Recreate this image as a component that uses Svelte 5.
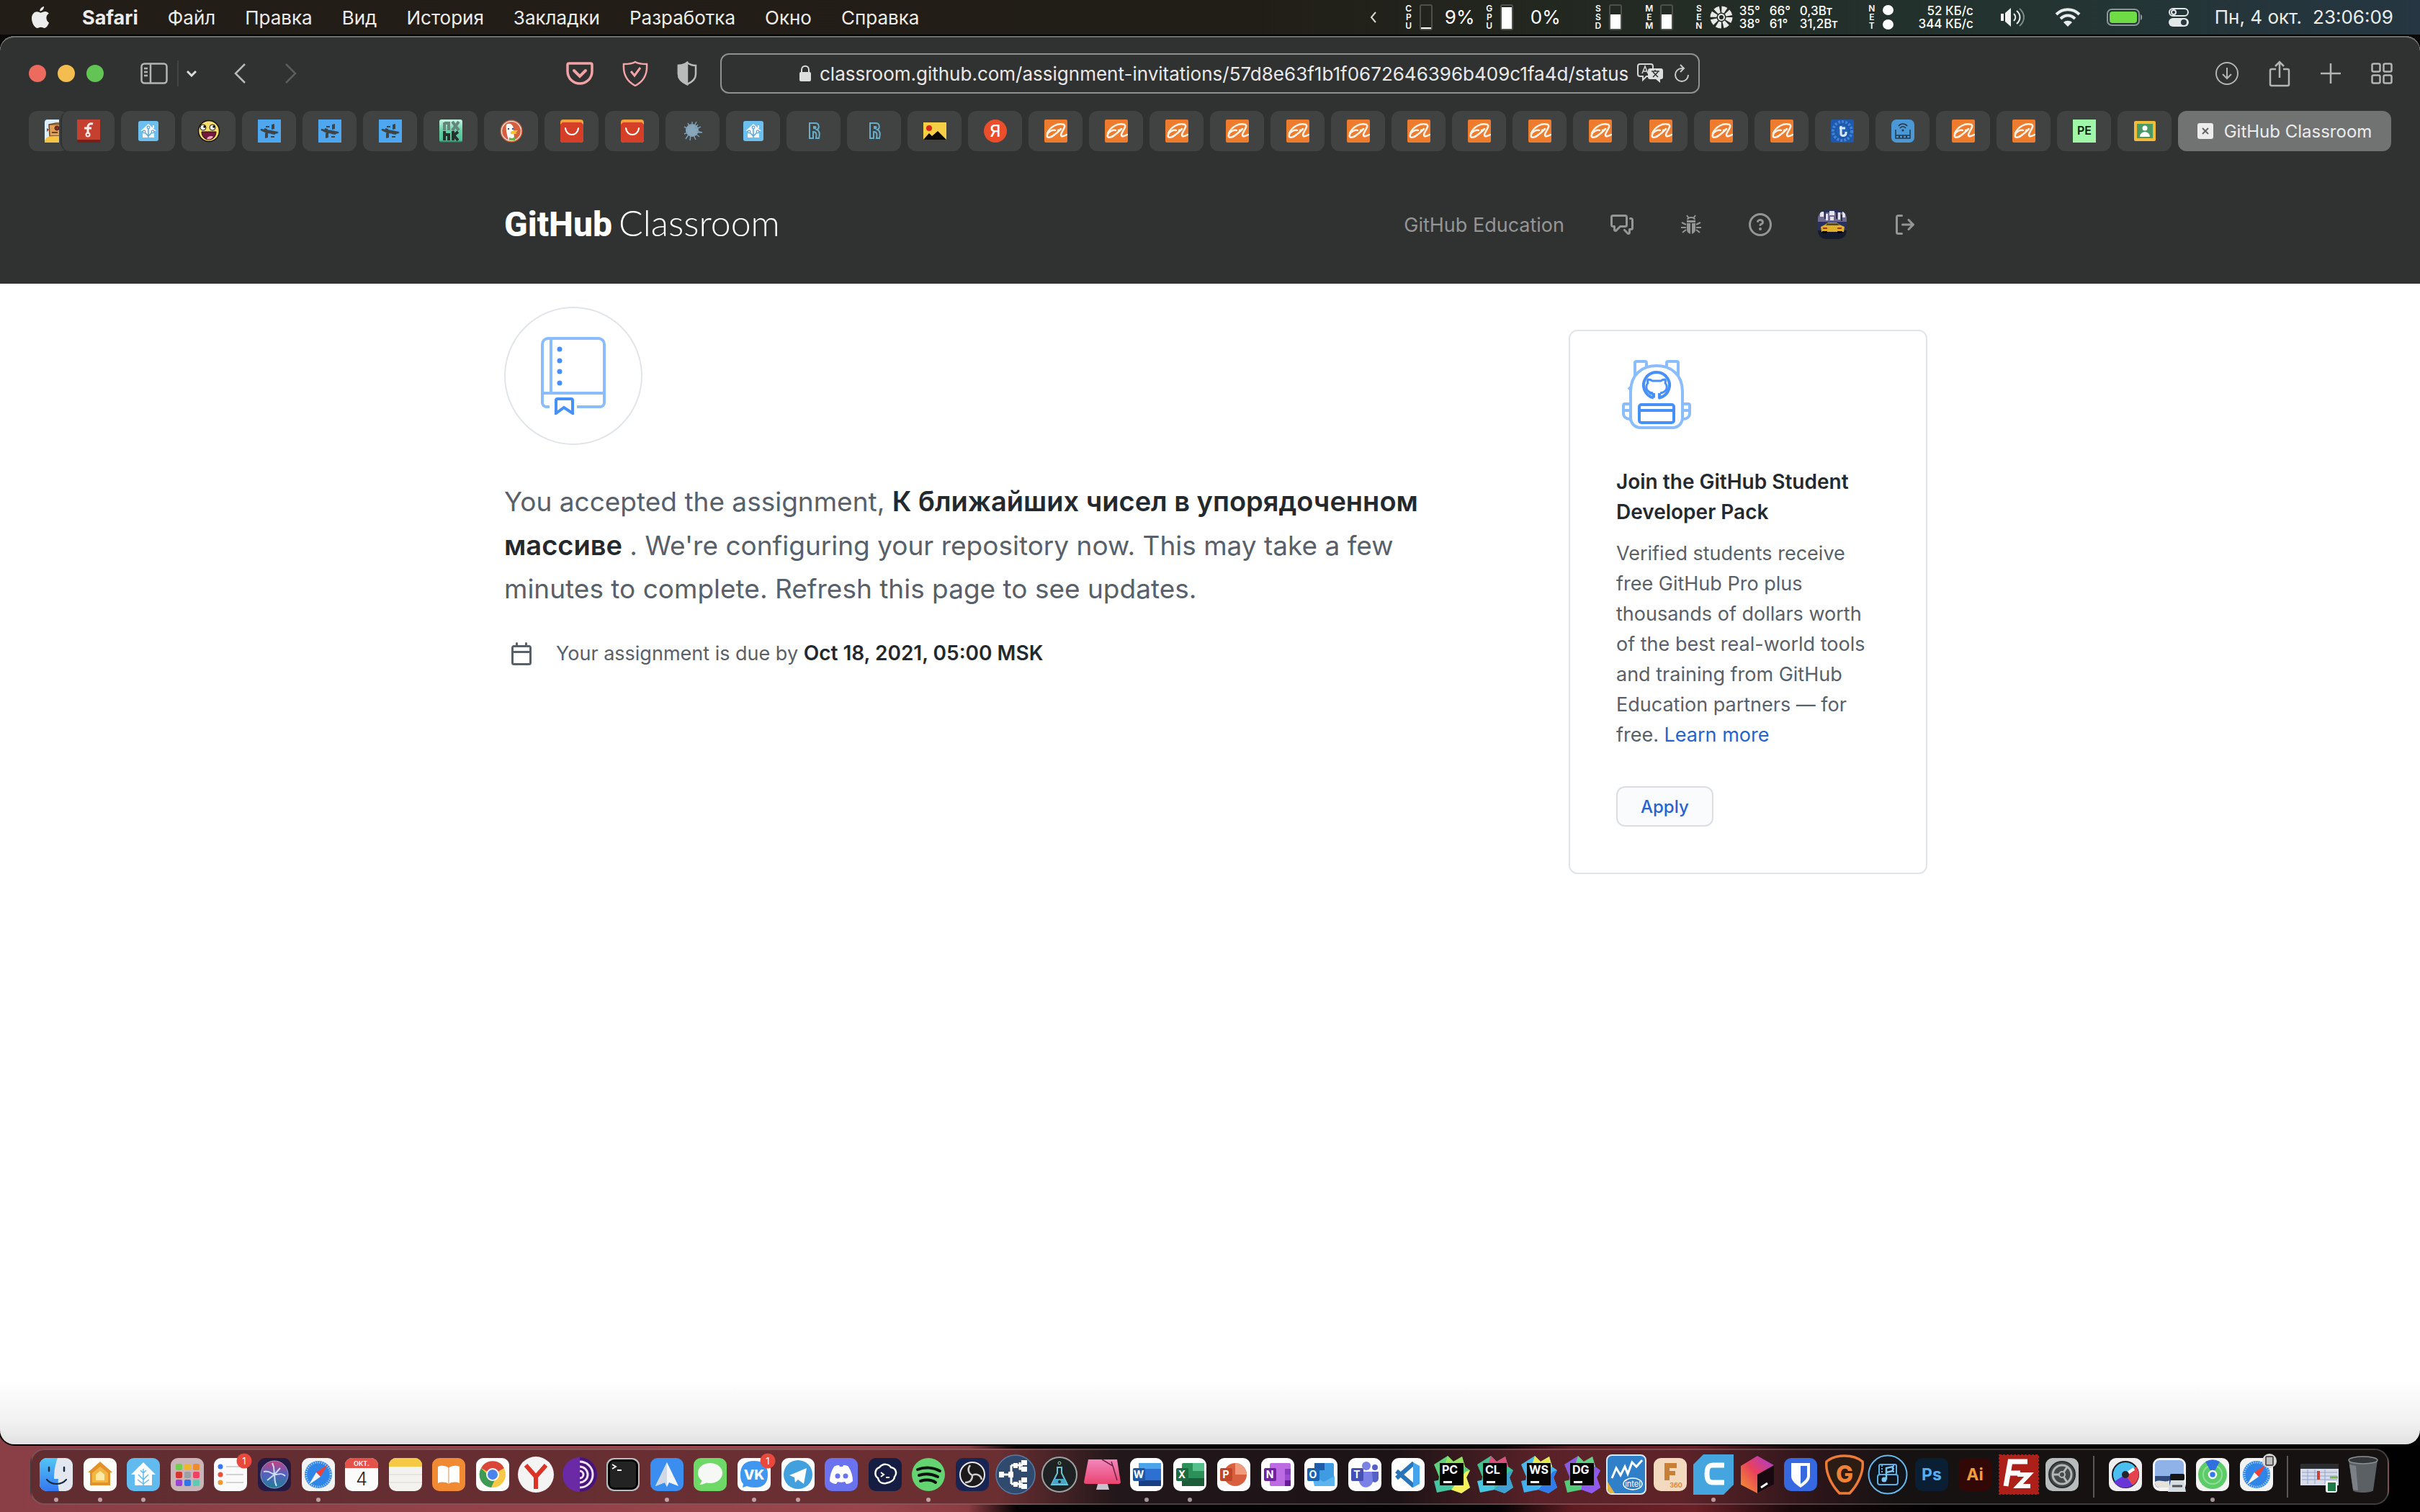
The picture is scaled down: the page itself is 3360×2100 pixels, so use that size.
<script>
  const menus = ['Файл', 'Правка', 'Вид', 'История', 'Закладки', 'Разработка', 'Окно', 'Справка'];

  // Favicons, drawn on a 32 x 32 grid
  const fav = {
    robot: '<rect width="32" height="32" rx="4" fill="#dceefb"/><path d="M6 7l10-2h12v18H7z" fill="#e0a055" stroke="#6b4423" stroke-width="1.500"/><path d="M6 7h22" stroke="#6b4423"/><circle cx="17" cy="12" r="3" fill="#8c2b22" stroke="#3f2412"/><path d="M3 12l3 2-3 3z" fill="#a8322c"/><path d="M10 18h8" stroke="#6b4423" stroke-width="2"/><path d="M0 32c0-6 4-9 12-9h20v9z" fill="#f6c242"/>',
    f: '<rect width="32" height="32" fill="#c5402f"/><rect y="28" width="32" height="4" fill="#7b1f16"/><path d="M22 6c-5-1-7 1-7 5v9M10 12h10" stroke="#fbeeec" stroke-width="3" fill="none"/><circle cx="15" cy="21" r="2.500" fill="none" stroke="#fbeeec" stroke-width="2"/>',
    home: '<rect x="2" y="2" width="28" height="28" rx="3" fill="#6cbfee"/><path d="M16 6l11 10h-3v9H8v-9H5z" fill="#f5f5f5"/><path d="M22 8h2v4h-2z" fill="#f5f5f5"/><path d="M16 12v13M16 23l-5-5M16 23l5-5" stroke="#5aa9d6" stroke-width="1.500" fill="none"/><g fill="#f5f5f5" stroke="#5aa9d6" stroke-width="1.200"><circle cx="16" cy="11" r="1.800"/><circle cx="10" cy="17" r="1.800"/><circle cx="22" cy="17" r="1.800"/></g>',
    smile: '<circle cx="16" cy="16" r="14.500" fill="#f7dc6c" stroke="#16130a" stroke-width="1.500"/><circle cx="8" cy="11" r="4" fill="#fff" stroke="#16130a"/><circle cx="21" cy="11" r="4" fill="#fff" stroke="#16130a"/><circle cx="10" cy="10" r="1.800" fill="#111"/><circle cx="23" cy="10" r="1.800" fill="#111"/><path d="M6 17h20c0 6-4 11-10 11S6 23 6 17z" fill="#74183d" stroke="#16130a"/><path d="M13 27c1-4 7-5 9-3-2 3-5 4-9 3z" fill="#efa6c4"/>',
    ha: '<rect width="32" height="32" fill="#4ea7ef"/><path d="M19 7l4-1v7l-4 1zM10 19l4-1v7l-4 1z" fill="#3f4447"/><path d="M4 14l14 2 10 2-4 1-12-1z" fill="#3f4447" stroke="#3f4447" stroke-width="2"/><path d="M11 10h5M9 13l4 1M18 19l6 1M18 24h5" stroke="#3f4447" stroke-width="2"/>',
    uxhk: '<rect width="32" height="32" rx="3" fill="url(#gMint)"/><path d="M7 4v11M7 5h6v10M18 3l9 12M27 3l-9 12" stroke="#66867d" stroke-width="4" fill="none"/><path d="M7 16v13M7 21h6v8M19 16v13M26 17l-6 5 6 7" stroke="#24312d" stroke-width="4" fill="none"/>',
    duck: '<circle cx="16" cy="16" r="15.500" fill="#d5603f"/><circle cx="16" cy="16" r="13.500" fill="none" stroke="#f7ece8" stroke-width="1.200"/><path d="M9 7c5-3 10 0 10 7l1 14c-3 1-6 1-8 0-2-6-4-14-3-21z" fill="#fff"/><path d="M15 17c3-2 7-2 10-2-2 3-3 3-4 3l3 1c-3 2-7 1-9 1z" fill="#f7c331"/><path d="M13 25l4 1 4-2v5h-8z" fill="#67b04a"/><circle cx="12" cy="13" r="1.200" fill="#2d4f8e"/><circle cx="18" cy="13" r="1.200" fill="#2d4f8e"/>',
    ali: '<rect width="32" height="32" rx="4" fill="#f2a13c"/><path d="M0 7l3-3h26l3 3v21a4 4 0 01-4 4H4a4 4 0 01-4-4z" fill="#d53f27"/><path d="M7 12c1 12 17 12 18 0" stroke="#fff" stroke-width="2.200" fill="none" stroke-linecap="round"/>',
    splat: '<circle cx="15" cy="15" r="9" fill="#86a7bb"/><path d="M15 3v5M21 3l-3 6M27 10l-6 3M29 18l-8-2M25 24l-5-4M20 28l-3-6M12 29l1-7M6 27l4-6M4 20l5-2M4 10l5 3M9 5l3 5M22 18l7 0M23 7l-4 5" stroke="#7a9db3" stroke-width="1.500"/>',
    r: '<path d="M10 5h8c6 0 6 8 2 9 5 2 4 8 3 12h-4c1-5 1-9-4-9v9h-5z" fill="none" stroke="#66aecb" stroke-width="2"/><path d="M15 9h3c2 0 2 4 0 4h-3z" fill="#66aecb"/>',
    pic: '<rect y="4" width="32" height="24" fill="#f7cf46"/><path d="M0 28l8-9 4 4 8-7 12 12z" fill="#0b0905"/><circle cx="8" cy="12" r="4" fill="#d9291c"/>',
    ya: '<circle cx="16" cy="16" r="16" fill="#ea4e2a"/><text x="16" y="24" text-anchor="middle" font-size="23" font-weight="500" fill="#fff">Я</text>',
    alibaba: '<rect width="32" height="32" rx="2" fill="#ee7c2f"/><path d="M4 19C8 10 19 4 27 7c4 2-3 9-4 14 0 4 4 2 8 0M15 15c-4-1-10 2-11 6-2 6 6 4 10 0 3-2 6-5 9-8" stroke="#fff3e8" stroke-width="2.500" fill="none" stroke-linecap="round"/><path d="M18 15l2-1" stroke="#fff3e8" stroke-width="1.500"/>',
    coin: '<rect width="32" height="32" rx="3" fill="#1f59ab"/><circle cx="16" cy="16" r="13" fill="none" stroke="#3f83d6" stroke-width="4" stroke-dasharray="3 2"/><circle cx="16" cy="16" r="8" fill="#2462b5"/><path d="M14 9v11c0 4 7 3 7-1v-2M12 12h8" stroke="#dbe9fa" stroke-width="3" fill="none"/>',
    router: '<rect width="32" height="32" rx="7" fill="#4a98d6"/><path d="M6 14v8M26 14v8M6 22h20v4H6zM10 9c3-4 9-4 12 0M12 12c2-3 6-3 8 0" stroke="#25394a" stroke-width="1.500" fill="none"/><path d="M10 24h2M15 24h2M20 24h2" stroke="#25394a" stroke-width="3"/><circle cx="16" cy="15" r="1.500" fill="#25394a"/>',
    pe: '<rect width="32" height="32" fill="#a1f7a8"/><text x="16" y="21" text-anchor="middle" font-size="16" font-weight="600" fill="#10200f">PE</text>',
    room: '<rect x="1" y="2" width="30" height="28" rx="2" fill="#f1bc3a"/><rect x="5" y="6" width="22" height="20" fill="#4c9a63"/><circle cx="16" cy="12" r="3.500" fill="#fff"/><path d="M9 24c0-9 14-9 14 0z" fill="#fff"/>'
  };

  const tabs = [
    'home', 'smile', 'ha', 'ha', 'ha', 'uxhk', 'duck', 'ali', 'ali', 'splat', 'home', 'r', 'r', 'pic', 'ya',
    ...Array(13).fill('alibaba'), 'coin', 'router', 'alibaba', 'alibaba', 'pe', 'room'
  ];

  // Dock icons, drawn on a 56 x 56 grid; most sit on a 46 px rounded tile
  const tile = (fill, inner = '') => `<rect x="5" y="5" width="46" height="46" rx="10" fill="${fill}"/>${inner}`;
  const office = (dark, letter, shape) =>
    tile('#fff', `${shape}<rect x="9" y="19" width="17" height="18" rx="2" fill="${dark}"/><text x="17" y="33" text-anchor="middle" font-size="14" font-weight="700" fill="#fff">${letter}</text>`);
  const jet = (colors, letters) =>
    `<path d="M3 14L22 2l8 8 12-7 4 14 7 5-5 10 5 14-12 8-14-5-20 2 3-20z" fill="${colors[0]}"/><path d="M22 2l8 8 12-7 4 14-30 4z" fill="${colors[1]}"/><path d="M53 46l-12 8-14-5 20-25 6-2-5 10z" fill="${colors[2]}"/><path d="M3 37l24-5v17l-20 4z" fill="${colors[3]}"/><rect x="11" y="12" width="33" height="31" fill="#060606"/><text x="14" y="27" font-size="16" font-weight="700" fill="#fff">${letters}</text><rect x="16" y="37" width="12" height="3" fill="#fff"/>`;
  const compass = '<circle cx="28" cy="28" r="19" fill="#2f86e8"/><circle cx="28" cy="28" r="17" fill="none" stroke="#b8dcfb" stroke-width="3" stroke-dasharray="1 2"/><path d="M41 14L31 31l-6-6z" fill="#ee4237"/><path d="M15 42l10-17 6 6z" fill="#f4f4f4"/>';
  const badge = '<circle cx="47" cy="9" r="10.500" fill="#e8493b"/><text x="47" y="14" text-anchor="middle" font-size="13" fill="#fff">1</text>';

  const apps = [
    { n: 'Finder', run: true, s: tile('#e3e8f0', '<path d="M30 5H15A10 10 0 005 15v26a10 10 0 0010 10h17c-1-5-2-9-1-17h-6c0-12 2-21 5-29z" fill="url(#gBlue)"/><path d="M18 18v5M39 18v5" stroke="#1c2b3c" stroke-width="2.500" stroke-linecap="round"/><path d="M15 35c7 8 20 8 27 0" stroke="#1c2b3c" stroke-width="2.200" fill="none" stroke-linecap="round"/>') },
    { n: 'Дом', run: true, s: tile('#fdfcf8', '<path d="M28 10l17 15h-3v18H14V25h-3z" fill="#e2912b"/><path d="M28 17l11 9v13H17V26z" fill="#f4b643"/><path d="M28 23l6 5v8H22v-8z" fill="#fde9a6"/>') },
    { n: 'Home Assistant', run: true, s: tile('#62bbee', '<path d="M28 11l17 17h-5v15H16V28h-5z" fill="#fff"/><path d="M28 20v23M28 35l-7-7M28 35l7-7M28 41l-8-6M28 41l8-6M28 26l-4-4M28 26l4-4" stroke="#62bbee" stroke-width="1.500" fill="none"/>') },
    { n: 'Launchpad', s: tile('#c9b4b8', ['#6fd04f', '#f0b62f', '#ee8b2d', '#d2362f', '#9c9fa3', '#ee4264', '#9a43d4', '#2f76ea', '#5dcbb2'].map((c, i) => `<rect x="${12 + (i % 3) * 12}" y="${13 + Math.floor(i / 3) * 11}" width="9" height="9" rx="2" fill="${c}"/>`).join('')) },
    { n: 'Напоминания', s: tile('#fafafa', '<circle cx="14" cy="17" r="3.500" fill="#3478f6"/><circle cx="14" cy="28" r="3.500" fill="#ea4f3d"/><circle cx="14" cy="39" r="3.500" fill="#f09a37"/><path d="M22 17h24M22 28h24M22 39h24" stroke="#c6c6c8" stroke-width="1.500"/>' + badge) },
    { n: 'Siri', s: tile('#251a44', '<circle cx="28" cy="28" r="19" fill="url(#gSiri)" stroke="#8fa0c8" stroke-width="1"/><path d="M13 24c8-2 11 3 15 4s9-4 15 2M25 12c4 7 2 12 3 16s-1 9 3 16M28 28l-10 8M28 28l8-9" stroke="#e9fbff" stroke-width="2" fill="none" opacity=".8"/>') },
    { n: 'Safari', run: true, s: tile('#f3f3f4', compass) },
    { n: 'Календарь', s: tile('#fbfbfb', '<path d="M5 19v-4A10 10 0 0115 5h26a10 10 0 0110 10v4z" fill="#e3534a"/><text x="28" y="16" text-anchor="middle" font-size="9" font-weight="600" fill="#fff">ОКТ.</text><text x="28" y="43" text-anchor="middle" font-size="25" font-weight="300" fill="#222">4</text>') },
    { n: 'Заметки', s: tile('#f3f2ef', '<path d="M5 17v-2A10 10 0 0115 5h26a10 10 0 0110 10v2z" fill="#f6c944"/><path d="M5 28h46M5 39h46" stroke="#d8d6d0"/>') },
    { n: 'Книги', s: tile('#f08b34', '<path d="M28 19c-4-4-11-4-15-2v23c4-2 11-2 15 1 4-3 11-3 15-1V17c-4-2-11-2-15 2z" fill="#fff"/><path d="M28 19v22" stroke="#e0b48a" stroke-width="1.500"/>') },
    { n: 'Chrome', s: tile('#fff', '<circle cx="28" cy="28" r="18" fill="#f8c947"/><path d="M28 28L12 19A18 18 0 0144 19z" fill="#d8473a"/><path d="M12 19a18 18 0 0014 27l6-13-8-2z" fill="#3f9a56"/><circle cx="28" cy="28" r="9" fill="#fff"/><circle cx="28" cy="28" r="7" fill="#4a82ee"/>') },
    { n: 'Яндекс', s: '<circle cx="28" cy="28" r="25" fill="#f4f4f5"/><path d="M14 15l14 16 14-16M28 30v18" stroke="#db3426" stroke-width="6" fill="none"/>' },
    { n: 'Tor Browser', s: '<circle cx="28" cy="28" r="24" fill="#6a2aa6"/><path d="M28 4a24 24 0 010 48z" fill="#481478"/><path d="M28 10a18 18 0 010 36M28 17a11 11 0 010 22M28 23a5 5 0 010 10" stroke="#efe3fa" stroke-width="3" fill="none"/>' },
    { n: 'Терминал', s: '<rect x="5" y="5" width="46" height="46" rx="10" fill="#b9bfc0"/><rect x="7" y="7" width="42" height="42" rx="9" fill="#000"/><rect x="10" y="10" width="36" height="36" rx="5" fill="#232323"/><path d="M13 14l5 3-5 3M20 22h6" stroke="#fff" stroke-width="1.800" fill="none"/>' },
    { n: 'Spark', run: true, s: tile('#3b8df0', '<path d="M28 11l16 33-13-5-3 6-3-6-13 5z" fill="#f3f6fa"/><path d="M28 11v34l-3-6-13 5z" fill="#cfd8e4"/>') },
    { n: 'Сообщения', s: tile('#6fd968', '<ellipse cx="28" cy="26" rx="17" ry="14" fill="#f6f8f5"/><path d="M17 34c0 4-2 6-4 8 5 0 9-2 12-4z" fill="#f6f8f5"/>') },
    { n: 'ВКонтакте', run: true, s: tile('#fff', '<path d="M28 9c13 0 19 7 19 19s-6 18-18 18c-5 0-8-1-11-2l-6 2 1-5c-3-3-4-7-4-13 0-12 6-19 19-19z" fill="#3f97f2"/><text x="28" y="35" text-anchor="middle" font-size="19" font-weight="800" fill="#fff">VK</text>' + badge) },
    { n: 'Telegram', run: true, s: tile('#fff', '<circle cx="28" cy="28" r="20" fill="#41a0dd"/><path d="M16 29l24-10-4 22-8-6-4 4-1-7z" fill="#fff"/>') },
    { n: 'Discord', s: tile('#6a72ee', '<path d="M18 17c3-2 6-2 7-2l1 2h4l1-2c1 0 5 0 7 2 4 6 6 13 6 20-3 3-6 4-9 4l-2-3c-3 1-7 1-10 0l-2 3c-3 0-6-1-9-4 0-7 2-14 6-20z" fill="#fff"/><circle cx="23" cy="30" r="3.500" fill="#6a72ee"/><circle cx="34" cy="30" r="3.500" fill="#6a72ee"/>') },
    { n: 'Termius', s: tile('#161d42', '<path d="M20 18c5-6 13-5 16 0 7 1 9 8 5 13 0 6-7 8-12 9-6 1-10-2-11-7-6-4-4-13 2-15z" fill="none" stroke="#fff" stroke-width="2.500"/><path d="M22 25l4 3-4 3M29 32h5" stroke="#fff" stroke-width="2" fill="none"/>') },
    { n: 'Spotify', run: true, s: '<circle cx="28" cy="28" r="23" fill="#63d471"/><path d="M13 21c10-4 22-3 31 2M15 29c9-3 18-2 26 2M17 37c7-2 15-2 21 2" stroke="#0c120d" stroke-width="4" fill="none" stroke-linecap="round"/>' },
    { n: 'OBS', s: tile('#182552', '<circle cx="28" cy="28" r="17" fill="#1c1a1b" stroke="#e8e8e8" stroke-width="2"/><path d="M28 29c-6-3-7-9-3-14M28 29c6-3 12 0 13 6M28 29c0 7-4 10-10 10" stroke="#cfcfcf" stroke-width="2.500" fill="none"/>') },
    { n: 'FolderSync', s: '<circle cx="28" cy="28" r="27" fill="#2f4a6c" stroke="#577ba4" stroke-width="1.500"/><path d="M10 28h12M22 15v26M22 15h16M22 41h16M34 11v9h6M34 36v9h6" stroke="#fff" stroke-width="3" fill="none"/><path d="M5 24h7v8H5zM36 8h8v7h-8zM36 17h8v7h-8zM36 32h8v7h-8zM36 41h8v7h-8zM18 24h7v8h-7zM25 12h6v7h-6zM25 38h6v7h-6z" fill="#fff"/>' },
    { n: 'Lab', s: '<circle cx="28" cy="28" r="24" fill="#1f2223" stroke="#9ba2a3" stroke-width="2"/><path d="M24 18h8M25 18v8l-8 16h22l-8-16v-8" stroke="#69c6d8" stroke-width="2" fill="none"/><path d="M21 34h14l3 7H18z" fill="#4aa4c4"/><circle cx="28" cy="12" r="2" fill="none" stroke="#8fd6b0"/><circle cx="28" cy="38" r="2" fill="#1f2223"/>' },
    { n: 'CleanMyMac', s: '<path d="M22 38h12l3 11H19z" fill="#c9c2cc"/><path d="M8 7h40l5 32a3 3 0 01-3 2H5a3 3 0 01-3-3z" fill="url(#gPink)"/><path d="M27 7l15 9 6 20M40 10l4 12" stroke="#6c2347" stroke-width="1.500" fill="none"/>' },
    { n: 'Word', run: true, s: office('#1f57a8', 'W', '<rect x="17" y="12" width="31" height="32" rx="2" fill="#2c71d2"/><path d="M17 12h31v8H17z" fill="#4ba3ea"/><path d="M17 36h31v8H17z" fill="#173f86"/>') },
    { n: 'Excel', run: true, s: office('#1d6a3e', 'X', '<rect x="17" y="12" width="31" height="32" rx="2" fill="#2c9159"/><path d="M32 12h16v11H32z" fill="#55c08b"/><path d="M17 33h31v11H17z" fill="#1c5c38"/>') },
    { n: 'PowerPoint', s: office('#c0462a', 'P', '<circle cx="30" cy="28" r="16" fill="#d9603f"/><path d="M30 12a16 16 0 0116 16H30z" fill="#f09a7e"/>') },
    { n: 'OneNote', s: office('#7220a0', 'N', '<rect x="17" y="12" width="29" height="32" rx="2" fill="#bd6be3"/><path d="M38 20h8v8h-8z" fill="#8a3cc0"/><path d="M38 28h8v8h-8z" fill="#9c4bd0"/><path d="M38 36h8v8h-8z" fill="#6a1a98"/>') },
    { n: 'Outlook', s: office('#1a62b4', 'O', '<rect x="19" y="12" width="27" height="32" rx="2" fill="#3f9be2"/><path d="M19 12h14v10H19z" fill="#1f5ca8"/><path d="M16 30l16 8 15-8v14H19z" fill="#5bb4ef"/>') },
    { n: 'Teams', s: office('#4450b4', 'T', '<circle cx="30" cy="16" r="6" fill="#7a82e6"/><circle cx="42" cy="18" r="4" fill="#5560c4"/><path d="M20 24h19v10a9 9 0 01-19 4z" fill="#7a82e6"/><path d="M38 24h9v9c0 5-5 7-8 5z" fill="#5560c4"/>') },
    { n: 'VS Code', s: tile('#fff', '<path d="M36 12L12 33M36 44L12 23" stroke="#2a74b8" stroke-width="6" fill="none"/><path d="M35 11l9 5v25l-9 5z" fill="#45a5ec"/>') },
    { n: 'PyCharm', s: jet(['#5fce7d', '#93e05e', '#f5f05c', '#45c6a0'], 'PC') },
    { n: 'CLion', s: jet(['#3fc08e', '#d94f7c', '#3f9fd0', '#4ac6e0'], 'CL') },
    { n: 'WebStorm', s: jet(['#49b9ec', '#e6ea52', '#2f7bea', '#40b0f0'], 'WS') },
    { n: 'DataGrip', s: jet(['#8a5ae0', '#62d07e', '#8f5bee', '#52cc78'], 'DG') },
    { n: 'Intel Power Gadget', s: '<rect x="1" y="1" width="54" height="54" rx="7" fill="#2f80c9" stroke="#dfe7ee" stroke-width="2"/><path d="M2 38l10 16H8c-4 0-6-3-6-6z" fill="#e6b540"/><path d="M8 33l6-14 6 10 6-12 4 10 6-16 6 6 8-9" stroke="#fff" stroke-width="3" fill="none"/><ellipse cx="37" cy="41" rx="13" ry="8" fill="none" stroke="#fff" stroke-width="1.500"/><text x="37" y="45" text-anchor="middle" font-size="11" fill="#fff">intel</text>' },
    { n: 'Fusion 360', s: tile('#f3d9bd', '<path d="M20 36V12h17v7H27v4h8v6h-8v7z" fill="#c97f35"/><text x="36" y="46" text-anchor="middle" font-size="9" font-weight="600" fill="#e0812f">360</text>') },
    { n: 'Cura', run: true, s: '<path d="M14 0h42v42L42 56H0V14z" fill="#45a5de"/><path d="M43 15H27c-6 0-8 4-8 12s2 12 8 12h16" stroke="#fff" stroke-width="7" fill="none"/>' },
    { n: 'JetBrains Toolbox', s: '<path d="M28 2l23 13v27L28 54 5 42V16z" fill="url(#gBox)"/><path d="M28 28l23-13v27L28 54z" fill="#17090f"/><path d="M33 46l9-6" stroke="#fff" stroke-width="3"/>' },
    { n: 'Bitwarden', s: tile('#3669df', '<path d="M15 12h26v18c0 7-7 12-13 16-6-4-13-9-13-16z" fill="#fff"/><path d="M28 16h9v14c0 4-5 8-9 11z" fill="#3669df"/>') },
    { n: 'GitKraken', s: '<path d="M28 2c10 0 18 2 25 8 2 16-8 34-18 44h-14C11 44 1 26 3 10 10 4 18 2 28 2z" fill="#2b1c14" stroke="#ee7a35" stroke-width="3.500"/><text x="28" y="39" text-anchor="middle" font-size="32" font-weight="800" fill="#f08238">G</text>' },
    { n: 'Media', s: '<circle cx="28" cy="28" r="26.500" fill="#11151b" stroke="#66b8ec" stroke-width="2"/><rect x="16" y="14" width="24" height="14" rx="2" fill="none" stroke="#5fb0e6" stroke-width="2"/><path d="M20 15v12M36 15v12" stroke="#5fb0e6" stroke-width="2" stroke-dasharray="2 2"/><rect x="14" y="28" width="28" height="14" rx="3" fill="#11151b" stroke="#5fb0e6" stroke-width="2"/><path d="M26 35V19l9-2v6l-9 2" stroke="#7cc6f5" stroke-width="2.500" fill="none"/><circle cx="23" cy="35" r="3.500" fill="#7cc6f5"/>' },
    { n: 'Photoshop', s: tile('#0a1f33', '<text x="28" y="36" text-anchor="middle" font-size="23" font-weight="700" fill="#55aef5">Ps</text>') },
    { n: 'Illustrator', s: tile('#320806', '<text x="28" y="36" text-anchor="middle" font-size="23" font-weight="700" fill="#f39c38">Ai</text>') },
    { n: 'FileZilla', s: '<rect x="1" y="1" width="54" height="54" fill="#ac2019" stroke="#ac2019" stroke-width="2" stroke-dasharray="3 2"/><path d="M10 44l6-34h24M14 26h16" stroke="#fff" stroke-width="7" fill="none"/><path d="M26 28h16L27 44h17" stroke="#fff" stroke-width="6" fill="none"/>' },
    { n: 'Системные настройки', s: tile('#b9bcbd', '<circle cx="28" cy="28" r="18" fill="#46494b" stroke="#2c2e2f" stroke-width="2"/><circle cx="28" cy="28" r="13" fill="none" stroke="#b4b7b8" stroke-width="3"/><circle cx="28" cy="28" r="4" fill="none" stroke="#b4b7b8" stroke-width="2"/><path d="M24 28H14M30 31l6 9M30 25l6-9" stroke="#b4b7b8" stroke-width="3"/>') }
  ];

  const recent = [
    { n: 'iStat', s: tile('#efefef', '<circle cx="28" cy="28" r="18" fill="#49c0f0" stroke="#1d1d22" stroke-width="2"/><path d="M28 28L43 17a18 18 0 01-5 26z" fill="#e5444e"/><path d="M28 28l10 15a18 18 0 01-26-5z" fill="#6a36d8"/><path d="M28 28l12-8" stroke="#fff" stroke-width="4"/><circle cx="28" cy="28" r="5" fill="#26262b"/>') },
    { n: 'Просмотр', s: tile('#f4f4f4', '<rect x="8" y="8" width="40" height="38" rx="6" fill="#8fb2e8"/><path d="M8 30h40v10a6 6 0 01-6 6H14a6 6 0 01-6-6z" fill="#2e4a7a"/><path d="M8 38c8-4 14 2 20-2v10H14a6 6 0 01-6-6z" fill="#e5e2dc"/><rect x="29" y="27" width="20" height="9" rx="2" fill="#151515"/><path d="M30 36h18l3 16H26z" fill="#d5dde2"/><path d="M32 44h14" stroke="#555" stroke-width="3"/>') },
    { n: 'Локатор', run: true, s: tile('#f4f4f4', '<circle cx="28" cy="28" r="20" fill="#5dcb68"/><circle cx="28" cy="28" r="13" fill="none" stroke="#8de094" stroke-width="2"/><path d="M28 28L18 10a21 21 0 0120 0z" fill="#2f6fe0"/><circle cx="28" cy="28" r="5" fill="#2f7cf0" stroke="#fff" stroke-width="2.500"/>') },
    { n: 'Safari на iPad', s: tile('#f3f3f4', compass + '<circle cx="46" cy="9" r="10" fill="#d9d9d9"/><rect x="41" y="3" width="10" height="12" rx="1" fill="#bfbfbf" stroke="#333" stroke-width="1.500"/>') }
  ];

  const stash = [
    { n: 'Таблица', s: '<rect x="2" y="13" width="53" height="30" fill="#d7dce8"/><rect x="2" y="13" width="53" height="7" fill="#2c2d30"/><path d="M4 25h49M4 30h49M4 35h49M12 21v20M22 21v20M36 21v20" stroke="#8ea2d2"/><path d="M27 23v12" stroke="#c9423a" stroke-width="4"/><path d="M43 32h11" stroke="#7fb24e" stroke-width="3"/><rect x="37" y="37" width="16" height="16" rx="3" fill="#fff"/><rect x="40" y="39" width="11" height="12" fill="#1f7a48"/>' },
    { n: 'Корзина', s: '<path d="M8 8h40l-6 42c-2 4-26 4-28 0z" fill="#5a6064"/><path d="M18 16l3 34c-4 0-7-1-7-2L9 14z" fill="#7a8085"/><ellipse cx="28" cy="8" rx="20" ry="5" fill="#33373a" stroke="#8b9195" stroke-width="1.500"/>' }
  ];

  const oct = {
    chat: 'M1.500 2.750a.25.25 0 01.25-.25h8.500a.25.25 0 01.25.25v5.500a.25.25 0 01-.25.25h-3.500a.75.75 0 00-.53.22L3.500 11.440V9.250a.75.75 0 00-.75-.75h-1a.25.25 0 01-.25-.25v-5.500zM1.750 1A1.750 1.750 0 000 2.750v5.500C0 9.216.784 10 1.750 10H2v1.543a1.457 1.457 0 002.487 1.030L7.061 10h3.189A1.750 1.750 0 0012 8.250v-5.500A1.750 1.750 0 0010.250 1h-8.500zM14.500 4.750a.25.25 0 00-.25-.25h-.5a.75.75 0 110-1.500h.5c.966 0 1.750.784 1.750 1.750v5.500A1.750 1.750 0 0114.250 12H14v1.543a1.457 1.457 0 01-2.487 1.030L9.220 12.280a.75.75 0 111.060-1.060l2.220 2.220v-2.190a.75.75 0 01.75-.75h1a.25.25 0 00.25-.25v-5.500z',
    help: 'M8 1.500a6.500 6.500 0 100 13 6.500 6.500 0 000-13zM0 8a8 8 0 1116 0A8 8 0 010 8zm9 3a1 1 0 11-2 0 1 1 0 012 0zM6.920 6.085c.081-.16.19-.299.34-.398.145-.097.371-.187.74-.187.28 0 .553.087.738.225A.613.613 0 019 6.250c0 .177-.04.264-.077.318a.956.956 0 01-.277.245c-.076.051-.158.1-.258.161l-.007.004a7.728 7.728 0 00-.313.195 2.416 2.416 0 00-.692.661.75.75 0 001.248.832.956.956 0 01.276-.245 6.300 6.300 0 01.26-.16l.006-.004c.093-.057.204-.123.313-.195.222-.149.487-.355.692-.662.214-.32.329-.702.329-1.150 0-.76-.36-1.348-.863-1.725A2.760 2.760 0 008 4c-.631 0-1.155.16-1.572.438-.413.276-.68.638-.849.977a.75.75 0 001.342.67z',
    out: 'M2 2.750C2 1.784 2.784 1 3.750 1h2.500a.75.75 0 010 1.500h-2.500a.25.25 0 00-.25.25v10.500c0 .138.112.25.25.25h2.500a.75.75 0 010 1.500h-2.500A1.750 1.750 0 012 13.250V2.750zm10.440 4.500H6.750a.75.75 0 000 1.500h5.690l-1.970 1.970a.75.75 0 101.060 1.060l3.250-3.250a.75.75 0 000-1.060l-3.250-3.250a.75.75 0 10-1.060 1.060l1.970 1.970z',
    calendar: 'M4.750 0a.75.75 0 01.75.75V2h5V.75a.75.75 0 011.500 0V2h1.250c.966 0 1.750.784 1.750 1.750v10.500A1.750 1.750 0 0113.250 16H2.750A1.750 1.750 0 011 14.250V3.750C1 2.784 1.784 2 2.750 2H4V.75A.75.75 0 014.750 0zm0 3.500h8.500a.25.25 0 01.25.25V6h-11V3.750a.25.25 0 01.25-.25h2zm-2.250 4v6.750c0 .138.112.25.25.25h10.500a.25.25 0 00.25-.25V7.500h-11z'
  };
</script>

{#snippet meter(label, level)}
  <span class="stack">{#each label as ch}<span>{ch}</span>{/each}</span>
  <span class="meter"><span class="level" style="height: {level}%"></span></span>
{/snippet}

{#snippet dockItem(app)}
  <button class="app" aria-label={app.n}>
    <svg viewBox="0 0 56 56" width="56" height="56" overflow="visible">{@html app.s}</svg>
    {#if app.run}<span class="dot"></span>{/if}
  </button>
{/snippet}

<div class="desktop">
  <svg class="defs" width="0" height="0" aria-hidden="true">
    <defs>
      <linearGradient id="gMint" x1="0" y1="0" x2="0" y2="1"><stop offset="0" stop-color="#c9f5e4" /><stop offset=".5" stop-color="#63d0a5" /><stop offset=".9" stop-color="#52c296" /><stop offset="1" stop-color="#1f5f48" /></linearGradient>
      <linearGradient id="gBlue" x1="0" y1="0" x2="0" y2="1"><stop offset="0" stop-color="#52c6f5" /><stop offset="1" stop-color="#3478f2" /></linearGradient>
      <linearGradient id="gPink" x1="0" y1="0" x2="0" y2="1"><stop offset="0" stop-color="#f287bd" /><stop offset="1" stop-color="#ea4470" /></linearGradient>
      <linearGradient id="gBox" x1="1" y1="0" x2="0" y2="1"><stop offset="0" stop-color="#a53be0" /><stop offset=".5" stop-color="#e8415c" /><stop offset="1" stop-color="#f59a2c" /></linearGradient>
      <linearGradient id="gSiri" x1="0" y1="0" x2="0" y2="1"><stop offset="0" stop-color="#c8407c" /><stop offset=".45" stop-color="#5a5fc0" /><stop offset="1" stop-color="#1f7f96" /></linearGradient>
    </defs>
  </svg>

  <header class="menubar">
    <nav class="menus" aria-label="Меню">
      <button aria-label="Apple" class="apple">
        <svg viewBox="0 0 26 32" width="26" height="32" fill="#ececec"><path d="M18 1c.3 3-2.600 6.500-5.600 6.500C12 4.500 15 1.300 18 1zM25 23.500c-1 3-3.700 7.500-6.300 7.500-1.900 0-2.600-1.200-4.900-1.200S10.700 31 9 31C5.300 31 1 24 1 17.500 1 11.600 4.800 8.300 8.500 8.300c2.300 0 4 1.400 5.400 1.400 1.300 0 3.300-1.600 6.100-1.600 1.500 0 3.500.8 4.800 2.700-4.900 2.900-4.100 10.100.2 12.700z" /></svg>
      </button>
      <button class="strong">Safari</button>
      {#each menus as m}<button>{m}</button>{/each}
    </nav>
    <div class="status">
      <svg class="caret" viewBox="0 0 10 16" width="10" height="16" fill="none" stroke="#d8d8d4" stroke-width="2"><path d="M8 1L2 8l6 7" /></svg>
      <div class="gauge">{@render meter('CPU', 6)}<span class="pct">9%</span></div>
      <div class="gauge">{@render meter('GPU', 94)}<span class="pct wide">0%</span></div>
      <div class="gauge ssd">{@render meter('SSD', 62)}</div>
      <div class="gauge mem">{@render meter('MEM', 62)}</div>
      <div class="gauge">
        <span class="stack"><span>S</span><span>E</span><span>N</span></span>
        <svg viewBox="0 0 32 32" width="32" height="32"><circle cx="16" cy="16" r="11" fill="none" stroke="#e8e8e6" stroke-width="9" stroke-dasharray="6 2.640" /><circle cx="16" cy="16" r="4" fill="none" stroke="#e8e8e6" stroke-width="2" /></svg>
        <span class="temps"><span>35°</span><span>66°</span><span>0,3Вт</span><span>38°</span><span>61°</span><span>31,2Вт</span></span>
      </div>
      <div class="gauge net">
        <span class="stack"><span>N</span><span>E</span><span>T</span></span>
        <span class="leds"><span></span><span></span></span>
        <span class="rates"><span>52 КБ/с</span><span>344 КБ/с</span></span>
      </div>
      <svg class="sys sound" viewBox="0 0 34 28" width="34" height="28" fill="none" stroke="#f2f2f2" stroke-width="2"><path d="M1 9h4v10H1zM7 8l8-7v26l-8-7z" fill="#f2f2f2" stroke="none" /><path d="M19 9c3 3 3 7 0 10M23 5c6 5 6 13 0 18" /><path d="M27 2c8 7 8 17 0 24" stroke="#7d8a88" /></svg>
      <svg class="sys" viewBox="0 0 36 28" width="36" height="28" fill="none" stroke="#e9ecec" stroke-width="4"><path d="M2 10c9-9 23-9 32 0M8 16c6-6 14-6 20 0" /><path d="M18 27l-6-6c3-3 9-3 12 0z" fill="#e9ecec" stroke="none" /></svg>
      <svg class="sys" viewBox="0 0 50 24" width="50" height="24"><rect x="1" y="1" width="44" height="22" rx="6" fill="none" stroke="#8d9697" stroke-width="2" /><rect x="4" y="4" width="38" height="16" rx="4" fill="#6fdc45" /><path d="M47 8c3 1 3 7 0 8z" fill="#8d9697" /></svg>
      <svg class="sys" viewBox="0 0 28 26" width="28" height="26"><rect x="1" y="1" width="26" height="10" rx="5" fill="none" stroke="#e3e7e8" stroke-width="2" /><circle cx="7" cy="6" r="3" fill="none" stroke="#e3e7e8" stroke-width="2" /><rect y="14" width="28" height="12" rx="6" fill="#e3e7e8" /><circle cx="21" cy="20" r="4" fill="#2a3a40" /></svg>
      <time class="clock"><span>Пн, 4 окт.</span><span>23:06:09</span></time>
    </div>
  </header>

  <section class="window">
    <div class="toolbar">
      <div class="side">
        <div class="lights">
          <button class="close" aria-label="Закрыть"></button>
          <button class="mini" aria-label="Свернуть"></button>
          <button class="zoom" aria-label="Развернуть"></button>
        </div>
        <button class="sidebar" aria-label="Боковая панель">
          <svg viewBox="0 0 38 30" width="38" height="30" fill="none" stroke="#b3b4b4" stroke-width="2.500"><rect x="1.500" y="1.500" width="35" height="27" rx="4" /><path d="M14 2v26M5 8h5M5 13h5M5 18h5" /></svg>
        </button>
        <span class="rule"></span>
        <button aria-label="Группы вкладок"><svg viewBox="0 0 14 10" width="14" height="10" fill="none" stroke="#dcdcdc" stroke-width="3"><path d="M1 2l6 6 6-6" /></svg></button>
        <button class="back" aria-label="Назад"><svg viewBox="0 0 16 28" width="16" height="28" fill="none" stroke="#b8b9b9" stroke-width="2.500"><path d="M15 1L2 14l13 13" /></svg></button>
        <button class="forward" aria-label="Вперёд"><svg viewBox="0 0 16 28" width="16" height="28" fill="none" stroke="#5b5d5c" stroke-width="2.500"><path d="M1 1l13 13L1 27" /></svg></button>
        <div class="exts">
          <button aria-label="Pocket"><svg viewBox="0 0 38 32" width="38" height="32" fill="none" stroke="#f2a3a5" stroke-width="3.500"><path d="M4 2h30a2 2 0 012 2v9c0 10-8 17-17 17S2 23 2 13V4a2 2 0 012-2z" /><path d="M11 12l8 8 8-8" stroke-width="4" stroke-linecap="round" /></svg></button>
          <button aria-label="Защита"><svg viewBox="0 0 36 36" width="36" height="36" fill="none" stroke="#f2a3a5" stroke-width="2.500"><path d="M18 2c5 3 10 3 16 3 1 14-4 24-16 30C6 29 1 19 2 5c6 0 11 0 16-3z" /><path d="M12 15l5 6 8-11" stroke-width="3" /></svg></button>
          <button aria-label="Отчёт о конфиденциальности"><svg viewBox="0 0 28 34" width="28" height="34" fill="none" stroke="#b9baba" stroke-width="2.500"><path d="M14 2c4 3 8 4 12 4v12c0 7-5 11-12 14C7 29 2 25 2 18V6c4 0 8-1 12-4z" /><path d="M14 2v30C7 29 2 25 2 18V6c4 0 8-1 12-4z" fill="#b9baba" /></svg></button>
        </div>
      </div>
      <div class="address">
        <svg viewBox="0 0 16 24" width="16" height="24"><rect y="10" width="16" height="13" rx="2" fill="#dcdddd" /><path d="M3 11V7c0-7 10-7 10 0v4" fill="none" stroke="#dcdddd" stroke-width="2" /></svg>
        <input type="text" aria-label="Адрес" value="classroom.github.com/assignment-invitations/57d8e63f1b1f0672646396b409c1fa4d/status" />
        <button aria-label="Перевести"><svg viewBox="0 0 37 28" width="37" height="28"><path d="M4 1h15a3 3 0 013 3v11a3 3 0 01-3 3h-6l-5 5v-5H4a3 3 0 01-3-3V4a3 3 0 013-3z" fill="none" stroke="#d5d6d6" stroke-width="2" /><path d="M7 14l4-10 4 10M9 11h5" fill="none" stroke="#d5d6d6" stroke-width="1.500" /><path d="M18 7h15a3 3 0 013 3v9a3 3 0 01-3 3h-1v5l-6-5h-8a3 3 0 01-3-3v-9a3 3 0 013-3z" fill="#dcdddd" /><path d="M20 11h11M25 9v2M22 19l7-7M22 12l7 7" stroke="#303231" stroke-width="1.500" /></svg></button>
        <button aria-label="Обновить"><svg viewBox="0 0 22 26" width="22" height="26" fill="none" stroke="#c9caca" stroke-width="2"><path d="M20 15a9 9 0 11-9-9h3M9 1l5 5-5 5" /></svg></button>
      </div>
      <div class="tools">
        <button aria-label="Загрузки"><svg viewBox="0 0 32 32" width="32" height="32" fill="none" stroke="#b3b4b4" stroke-width="2"><circle cx="16" cy="16" r="15" /><path d="M16 8v15M10 17l6 6 6-6" /></svg></button>
        <button aria-label="Поделиться"><svg viewBox="0 0 30 38" width="30" height="38" fill="none" stroke="#b3b4b4" stroke-width="2.500"><path d="M10 13H4a2 2 0 00-2 2v19a2 2 0 002 2h22a2 2 0 002-2V15a2 2 0 00-2-2h-6M15 25V3M9 9l6-6 6 6" /></svg></button>
        <button aria-label="Новая вкладка"><svg viewBox="0 0 28 28" width="28" height="28" fill="none" stroke="#b3b4b4" stroke-width="2.500"><path d="M14 0v28M0 14h28" /></svg></button>
        <button aria-label="Обзор вкладок"><svg viewBox="0 0 30 30" width="30" height="30" fill="none" stroke="#b3b4b4" stroke-width="2.500"><rect x="1.500" y="1.500" width="11" height="11" rx="2" /><rect x="17.500" y="1.500" width="11" height="11" rx="2" /><rect x="1.500" y="17.500" width="11" height="11" rx="2" /><rect x="17.500" y="17.500" width="11" height="11" rx="2" /></svg></button>
      </div>
    </div>

    <div class="tabs">
      <button class="tab clipped" aria-label="Вкладка"><svg viewBox="0 0 20 32" width="20" height="32">{@html fav.robot}</svg></button>
      <button class="tab front" aria-label="Вкладка"><svg viewBox="0 0 32 32" width="32" height="32">{@html fav.f}</svg></button>
      {#each tabs as t}
        <button class="tab" aria-label="Вкладка"><svg viewBox="0 0 32 32" width="32" height="32">{@html fav[t]}</svg></button>
      {/each}
      <button class="tab active">
        <svg viewBox="0 0 22 22" width="22" height="22"><rect width="22" height="22" rx="3" fill="#ececec" /><path d="M7 7l8 8M15 7l-8 8" stroke="#636564" stroke-width="2" /></svg>
        GitHub Classroom
      </button>
    </div>

    <div class="site-head">
      <div class="bar">
        <a class="logo" href="/"><b>GitHub</b><span>Classroom</span></a>
        <nav class="links">
          <a href="/education">GitHub Education</a>
          <a href="/community" aria-label="Community"><svg viewBox="0 0 16 16" width="32" height="32"><path d={oct.chat} /></svg></a>
          <a href="/bugs" aria-label="Report a bug"><svg viewBox="-2 -2 32 32" width="32" height="32"><path d="M8 8h12v3H8zM8 12h5v15c-3-1-5-3-5-6zM20 12h-5v15c3-1 5-3 5-6z" /><path d="M9 7c1-4 9-4 10 0M10 4L8 1M18 4l2-3M7 14L1 11M7 18H0M7 21l-5 4M21 14l6-3M21 18h7M21 21l5 4" fill="none" stroke="currentColor" stroke-width="2" /></svg></a>
          <a href="/help" aria-label="Help"><svg viewBox="0 0 16 16" width="32" height="32"><path d={oct.help} /></svg></a>
          <a class="avatar" href="/me" aria-label="Profile"><svg viewBox="0 0 40 40" width="40" height="40"><rect width="40" height="40" fill="#27305e" /><path d="M0 3h40v13H0z" fill="#6f6a90" /><path d="M3 2h5v7H3zM11 5h3v9h-3zM16 1h7v6h-7zM17 9h5v5h-5zM28 3h3v10h-3zM34 2h4v8h-4z" fill="#e4e1f0" /><path d="M9 3h2v9H9zM25 3h2v9h-2zM32 6h2v9h-2z" fill="#2f2a48" /><path d="M0 28h40v12H0z" fill="#151a2c" /><path d="M4 23l6-3 4-3h12l4 3 7 3-1 7H5z" fill="#e0b02a" /><path d="M13 18h14l3 3H11z" fill="#5c4a17" /><path d="M7 25h6M27 25h6" stroke="#a8361f" stroke-width="2" /><path d="M6 29h7v3H6zM27 29h7v3h-7z" fill="#080808" /></svg></a>
          <a href="/logout" aria-label="Sign out"><svg viewBox="0 0 16 16" width="32" height="32"><path d={oct.out} /></svg></a>
        </nav>
      </div>
    </div>

    <main class="page">
      <section class="accepted">
        <div class="badge">
          <svg viewBox="0 0 90 108" width="90" height="108" fill="none" stroke="#8bbcfc" stroke-width="4"><path d="M12 97H8a6 6 0 01-6-6V10a8 8 0 018-8h70a8 8 0 018 8v81a6 6 0 01-6 6H50M2 78h86M14 4v72" /><path d="M21 106V88a2 2 0 012-2h19a2 2 0 012 2v18l-12-8z" stroke="#4690f8" /><g fill="#4690f8" stroke="none"><circle cx="26" cy="17" r="3.500" /><circle cx="26" cy="33" r="3.500" /><circle cx="26" cy="48" r="3.500" /><circle cx="26" cy="64" r="3.500" /></g></svg>
        </div>
        <p class="lead">You accepted the assignment, <strong>К ближайших чисел в упорядоченном массиве</strong> . We're configuring your repository now. This may take a few minutes to complete. Refresh this page to see updates.</p>
        <p class="due"><svg viewBox="0 0 16 16" width="32" height="32" fill="currentColor" fill-rule="evenodd"><path d={oct.calendar} /></svg><span>Your assignment is due by <strong>Oct 18, 2021, 05:00 MSK</strong></span></p>
      </section>
      <aside class="card">
        <svg viewBox="0 0 96 96" width="96" height="96" fill="none" stroke="#8bbcfc" stroke-width="4" stroke-linejoin="round"><path d="M12 84V44C12 20 28 8 48 8s36 12 36 36v36c0 8-6 14-14 14H26c-8 0-14-6-14-14z" /><path d="M18 22V4a2 2 0 012-2h12a2 2 0 012 2v6M62 10V4a2 2 0 012-2h12a2 2 0 012 2v18M12 61H4a2 2 0 00-2 2v11c0 5 4 8 10 8M2 70h10M84 61h8a2 2 0 012 2v11c0 5-4 8-10 8M84 70h10M12 38l-3 3" /><g stroke="#4690f8"><rect x="24" y="62" width="48" height="25" rx="3" /><path d="M24 70h48" /><path d="M44 52.500A18 18 0 1152 52.500V46M44 52.500V46" /><path d="M43 46c-7-1-10-5-9-10 0-2 1-3 2-4-1-2 0-4 0-5 3 0 5 1 6 2h12c1-1 3-2 6-2 0 1 1 3 0 5 1 1 2 2 2 4 1 5-2 9-9 10M44 47c-3 1-5 0-7-3" stroke-width="3" /></g></svg>
        <h2>Join the GitHub Student Developer Pack</h2>
        <p>Verified students receive free GitHub Pro plus thousands of dollars worth of the best real-world tools and training from GitHub Education partners — for free. <a href="/pack">Learn more</a></p>
        <button class="apply">Apply</button>
      </aside>
    </main>
  </section>

  <footer class="dock">
    {#each apps as a}{@render dockItem(a)}{/each}
    <span class="sep"></span>
    {#each recent as a}{@render dockItem(a)}{/each}
    <span class="sep"></span>
    {#each stash as a}{@render dockItem(a)}{/each}
  </footer>
</div>

<style>
  :global(body) { background: #000; }
  .desktop, .desktop button, .desktop input {
    font-family: Inter, "Liberation Sans", sans-serif;
  }
  .desktop {
    min-height: 100vh;
    display: flex;
    flex-direction: column;
    box-sizing: border-box;
    padding-bottom: 10px;
    background:
      linear-gradient(180deg, #0b0908 0, #0b0908 200px, transparent 200px),
      linear-gradient(90deg, #8a3e45 0, #9a454c 36%, #8a3b42 40%, #060304 42%, #050304 62%, #5e1c22 65%, #6a2027 70%, #1a090b 74%, #020102 80%, #020102 100%);
  }
  .desktop * { box-sizing: border-box; }
  .defs { position: absolute; }
  svg { display: block; flex: none; }
  button {
    border: 0;
    padding: 0;
    margin: 0;
    background: none;
    color: inherit;
    font-size: inherit;
    display: block;
  }

  .menubar {
    display: flex;
    justify-content: space-between;
    align-items: center;
    height: 48px;
    padding: 0 37px 0 43px;
    margin-bottom: 2px;
    background: linear-gradient(90deg, #221d16 0, #211e17 52%, #232c25 70%, #233431 84%, #263642 100%);
    color: #ececea;
    font-size: 26px;
    line-height: 48px;
    white-space: nowrap;
  }
  .menus { display: flex; align-items: center; gap: 41px; }
  .apple { margin-right: 4px; }
  .menus .strong { font-weight: 700; font-size: 27px; }
  .status { display: flex; align-items: center; color: #fff; }
  .caret { margin-right: 38px; }
  .gauge { display: flex; align-items: center; gap: 9px; margin-right: 14px; }
  .gauge .pct { width: 42px; margin-left: 8px; }
  .gauge .wide { margin-left: 15px; }
  .ssd { margin-left: 32px; margin-right: 32px; }
  .mem { margin-right: 30px; }
  .net { margin-left: 16px; margin-right: 37px; }
  .stack { display: flex; flex-direction: column; width: 12px; font-size: 12px; font-weight: 600; line-height: 12px; text-align: center; }
  .stack span { display: block; }
  .meter { display: flex; align-items: flex-end; width: 18px; height: 36px; border: 2px solid #4d504b; border-radius: 3px; }
  .level { display: block; width: 100%; background: #fff; }
  .temps { display: grid; grid-template-columns: 42px 42px 64px; font-size: 17px; font-weight: 500; line-height: 18px; }
  .leds { display: flex; flex-direction: column; gap: 6px; }
  .leds span { width: 15px; height: 14px; border-radius: 50%; background: #fff; }
  .rates { display: flex; flex-direction: column; width: 102px; font-size: 17px; font-weight: 500; line-height: 18px; text-align: right; }
  .sys { margin-right: 36px; }
  .sound { margin-right: 42px; }
  .clock { display: flex; gap: 15px; color: #ececea; }

  .window {
    flex: 1;
    display: flex;
    flex-direction: column;
    margin-bottom: 6px;
    border-radius: 20px;
    overflow: hidden;
    background: linear-gradient(0deg, #e1e1e1 0, #f1f1f1 30px, #fff 90px, #fff 100%);
    box-shadow: 0 0 0 2px #000;
  }
  .toolbar {
    display: grid;
    grid-template-columns: 1fr minmax(0, 1360px) 1fr;
    align-items: center;
    height: 104px;
    background: #303231;
    box-shadow: inset 0 2px 0 #6d6f6e;
    border-radius: 20px 20px 0 0;
  }
  .side { display: flex; align-items: center; padding: 0 32px 0 40px; }
  .lights { display: flex; gap: 16px; }
  .lights button { width: 24px; height: 24px; border-radius: 50%; }
  .close { background: #ed6a5f; }
  .mini { background: #f4bd50; }
  .zoom { background: #61c455; }
  .sidebar { margin-left: 51px; }
  .rule { width: 2px; height: 36px; margin: 0 11px 0 13px; background: #434544; }
  .back { margin-left: 52px; }
  .forward { margin-left: 55px; }
  .exts { display: flex; align-items: center; gap: 40px; margin-left: auto; }
  .address {
    display: flex;
    align-items: center;
    height: 56px;
    padding: 0 12px 0 108px;
    border: 2px solid #8f9190;
    border-radius: 12px;
  }
  .address input {
    flex: 1;
    min-width: 0;
    height: 48px;
    margin-left: 12px;
    padding: 0;
    border: 0;
    outline: 0;
    background: none;
    color: #e9e9e9;
    font-size: 26px;
  }
  .address button + button { margin-left: 14px; }
  .tools { display: flex; align-items: center; justify-content: flex-end; gap: 42px; padding-right: 38px; }

  .tabs { display: flex; gap: 9px; padding: 0 40px 10px; background: #303231; }
  .tab {
    flex: 0 1 75px;
    min-width: 0;
    height: 56px;
    border-radius: 12px;
    background: #414342;
    display: flex;
    align-items: center;
    justify-content: center;
  }
  .clipped { flex-basis: 55px; justify-content: flex-end; padding-right: 13px; margin-right: -20px; }
  .front { border-left: 2px solid #303231; }
  .active {
    flex: 1 0 280px;
    gap: 15px;
    background: #717372;
    color: #ececec;
    font-size: 24px;
  }

  .site-head { background: #303231; }
  .bar {
    display: flex;
    align-items: center;
    justify-content: space-between;
    max-width: 1960px;
    height: 174px;
    margin: 0 auto;
    padding-top: 6px;
  }
  .logo { display: flex; align-items: baseline; gap: 9px; color: #fff; text-decoration: none; font-size: 48px; line-height: 60px; }
  .logo b { font-family: Roboto, sans-serif; font-weight: 800; }
  .logo span { font-family: Lato, sans-serif; font-weight: 300; font-size: 50px; }
  .links { display: flex; align-items: center; gap: 64px; padding-top: 4px; }
  .links a { color: #949695; text-decoration: none; font-size: 27px; }
  .links svg { fill: currentColor; fill-rule: evenodd; }
  .avatar { border-radius: 12px; overflow: hidden; }

  .page {
    display: flex;
    justify-content: space-between;
    align-items: flex-start;
    width: 100%;
    max-width: 1992px;
    margin: 0 auto;
    padding: 32px 0 0 16px;
  }
  .accepted { flex: 0 1 1300px; color: #586069; }
  .badge {
    display: flex;
    align-items: center;
    justify-content: center;
    width: 192px;
    height: 192px;
    border: 2px solid #e1e4e8;
    border-radius: 50%;
  }
  strong { color: #24292e; font-weight: 600; }
  .lead { margin: 48px 0 0; font-size: 37px; line-height: 60px; }
  .lead strong { font-size: 38px; }
  .due { display: flex; align-items: center; gap: 32px; margin: 37px 0 0 8px; font-size: 27px; line-height: 44px; }
  .due strong { font-size: 28px; }
  .card {
    flex: 0 0 498px;
    margin-top: 32px;
    padding: 40px 64px 64px;
    border: 2px solid #e1e4e8;
    border-radius: 12px;
    color: #586069;
    font-size: 27px;
    line-height: 42px;
  }
  .card svg { margin-left: 8px; }
  .card h2 { margin: 52px 0 0; color: #24292e; font-size: 28px; line-height: 42px; font-weight: 600; }
  .card p { margin: 16px 0 50px; }
  .card a { color: #2563d0; text-decoration: none; }
  .apply {
    height: 56px;
    padding: 0 32px;
    border: 2px solid #dcdee1;
    border-radius: 12px;
    background: #fafbfc;
    color: #2563d0;
    font-size: 24px;
    font-weight: 500;
  }

  .dock {
    display: flex;
    align-items: stretch;
    height: 78px;
    margin: 0 43px 0 42px;
    padding: 0 4px;
    border: 2px solid rgba(255, 255, 255, .18);
    border-radius: 20px;
    background: linear-gradient(90deg, #612d31 0, #6b2f32 36%, #6b2f32 41%, #22171a 46%, #1c1316 58%, #5a2228 64%, #5e2329 70%, #2a1519 76%, #171212 79%, #161212 100%);
  }
  .app {
    position: relative;
    flex: 1 1 0;
    min-width: 0;
    display: flex;
    justify-content: center;
    padding-top: 6px;
  }
  .dot { position: absolute; bottom: 2px; left: calc(50% - 3px); width: 6px; height: 6px; border-radius: 50%; background: rgba(255, 235, 238, .6); }
  .sep { flex: 0 0 27px; display: flex; justify-content: center; padding: 8px 0; }
  .sep::before { content: ""; width: 2px; background: #5a5757; }
</style>
